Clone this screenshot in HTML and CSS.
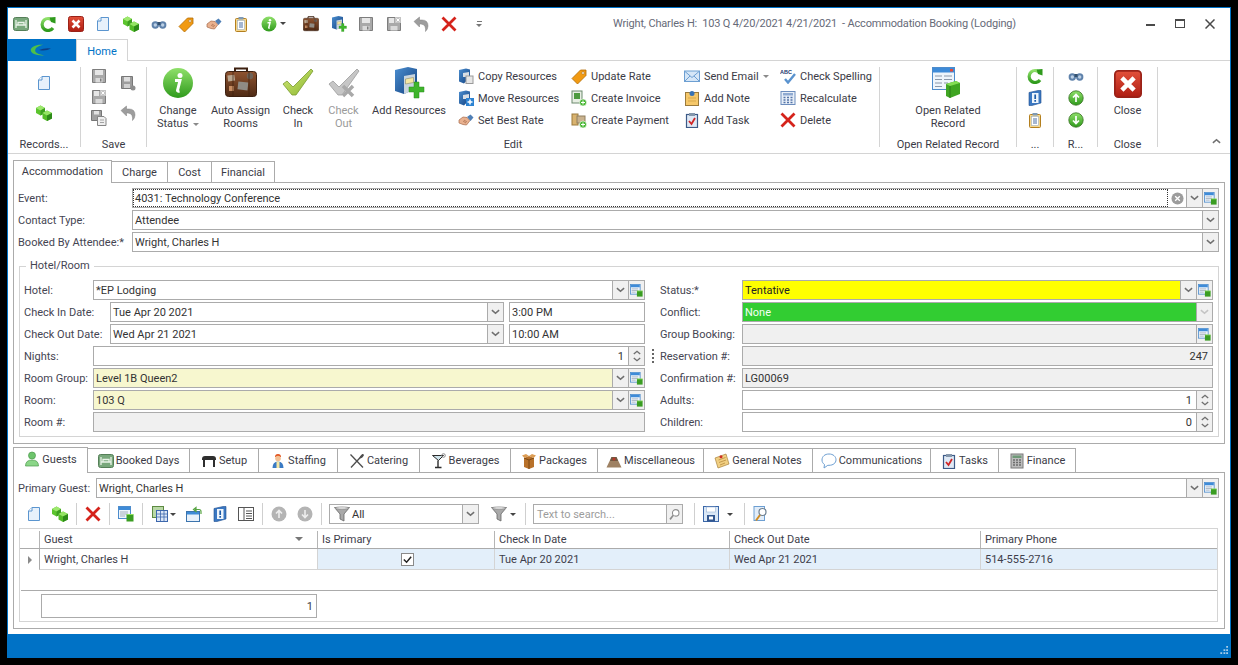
FILE: index.html
```html
<!DOCTYPE html>
<html lang="en">
<head>
<meta charset="utf-8">
<title>Accommodation Booking (Lodging)</title>
<link rel="stylesheet" href="styles.css">
</head>
<body>
<svg class="defs" aria-hidden="true">
<defs>
<linearGradient id="gGreen" x1="0" y1="0" x2="0" y2="1"><stop offset="0" stop-color="#8fe06a"/><stop offset="1" stop-color="#2f9a1c"/></linearGradient>
<linearGradient id="gLime" x1="0" y1="0" x2="1" y2="1"><stop offset="0" stop-color="#d3ea7a"/><stop offset="1" stop-color="#8ab52e"/></linearGradient>
<linearGradient id="gBlue" x1="0" y1="0" x2="1" y2="1"><stop offset="0" stop-color="#4b8ed0"/><stop offset="1" stop-color="#12407f"/></linearGradient>
<linearGradient id="gRed" x1="0" y1="0" x2="0" y2="1"><stop offset="0" stop-color="#e2503a"/><stop offset="1" stop-color="#ae1d12"/></linearGradient>
<linearGradient id="gBrown" x1="0" y1="0" x2="0" y2="1"><stop offset="0" stop-color="#8e5330"/><stop offset="1" stop-color="#4e2a14"/></linearGradient>
<symbol id="bed" viewBox="0 0 16 16"><rect x=".5" y="1.500" width="15" height="13" rx="2" fill="#79a87c" stroke="#557f58"/><path d="M3 4v8M13 4v8M3 9h10M5 6.500h6V9H5z" stroke="#eaf3e8" fill="none" stroke-width="1.300"/></symbol>
<symbol id="refresh" viewBox="0 0 16 16"><path d="M13 5A6 6 0 1 0 13 12" fill="none" stroke="url(#gGreen)" stroke-width="3.200"/><path d="M9.500 1.500L15.500 1v6.500L11 6z" fill="#2f9a1c"/></symbol>
<symbol id="closer" viewBox="0 0 16 16"><rect x=".5" y=".5" width="15" height="15" rx="2" fill="url(#gRed)" stroke="#9a2218"/><path d="M4.500 4.500l7 7M11.500 4.500l-7 7" stroke="#fff" stroke-width="2.600"/></symbol>
<symbol id="newdoc" viewBox="0 0 16 16"><path d="M2.500 5L6 1.500h7.500v13h-11z" fill="#e7f1fb" stroke="#5b95cf"/><path d="M6 1.500V5H2.500" fill="#fff" stroke="#5b95cf"/></symbol>
<symbol id="cubes" viewBox="0 0 16 16"><path d="M0 3l4.500-2.500L9 3v5l-4.500 2.500L0 8z" fill="#5cc42e"/><path d="M0 3l4.500 2.500L9 3 4.500.5z" fill="#9ee86e"/><path d="M4.500 5.500v5L9 8V3z" fill="#3c9f20"/><path d="M6.500 8L11 5.500 16 8v5.500L11 16l-4.500-2.500z" fill="#54bd28"/><path d="M6.500 8l4.500 2.500L16 8l-5-2.500z" fill="#94e464"/><path d="M11 10.500V16l5-2.500V8z" fill="#2d8b18"/></symbol>
<symbol id="binoc" viewBox="0 0 16 16"><circle cx="4.300" cy="9" r="3.700" fill="#5f82ab"/><circle cx="11.700" cy="9" r="3.700" fill="#5f82ab"/><circle cx="4.300" cy="9" r="1.700" fill="#bcd0e5"/><circle cx="11.700" cy="9" r="1.700" fill="#bcd0e5"/><rect x="6.500" y="6" width="3" height="3" fill="#34516f"/></symbol>
<symbol id="tag" viewBox="0 0 16 16"><path d="M1 10.500L9.500 2H15v5.500L6.500 16z" fill="#f19a12" stroke="#b26d08" stroke-width=".8"/><circle cx="12" cy="5" r="1.300" fill="#fff" stroke="#a86a10" stroke-width=".6"/></symbol>
<symbol id="hands" viewBox="0 0 16 16"><path d="M1 8l4-3 4 .5 3 3-3.500 4.500-3.500-.5L1 11z" fill="#e9b18f" stroke="#a66a4a" stroke-width=".7"/><path d="M9 5l3.500-2.500 3 3-3 3.500z" fill="#4f7fb5"/><path d="M5 9l3 2M6 8l3 2" stroke="#a66a4a" stroke-width=".7"/></symbol>
<symbol id="clip" viewBox="0 0 16 16"><rect x="2.500" y="2.500" width="11" height="13" rx="1" fill="#f5d68b" stroke="#b37f1f"/><rect x="4.500" y="4.500" width="7" height="9" fill="#fff" stroke="#8aa4c4" stroke-width=".5"/><rect x="5.500" y="1" width="5" height="2.500" fill="#7f9ab5"/><path d="M6 7h4M6 9h4M6 11h4" stroke="#4a6ea5"/></symbol>
<symbol id="info" viewBox="0 0 32 32"><circle cx="16" cy="16" r="15" fill="url(#gGreen)"/><path d="M13 13.500h5l-2.500 10q0 1 2 .5" fill="none" stroke="#fff" stroke-width="3"/><circle cx="18" cy="8.500" r="2.500" fill="#fff"/></symbol>
<symbol id="suit" viewBox="0 0 32 32"><path d="M10 5V1.500h12V5" fill="none" stroke="#3d2010" stroke-width="2"/><rect x=".5" y="4.500" width="31" height="25" rx="3" fill="url(#gBrown)" stroke="#3d2010"/><rect x="3" y="8" width="7" height="6" fill="#b9a68f" transform="rotate(-8 7 13)"/><rect x="13" y="15" width="10" height="8" fill="#8f8b84" transform="rotate(6 19 18)"/><circle cx="25" cy="9" r="3.200" fill="#6e6257"/><rect x="4" y="19" width="5" height="5" fill="#c78d62"/><path d="M8 5v25M24 5v25" stroke="#3d2010" stroke-width=".7"/></symbol>
<symbol id="addres" viewBox="0 0 32 32"><path d="M2 3l13-3 9 2v19l-13 6-9-3z" fill="url(#gBlue)"/><path d="M11 9l11-2v16l-11 4z" fill="#c8d4de"/><path d="M12.500 12l8-1.500v5l-8 1.500z" fill="#f6e7a3" stroke="#8a8a6a" stroke-width=".6"/><path d="M21 15h5v5h5v5h-5v6h-5v-6h-5v-5h5z" fill="#3fb52c" stroke="#2a8a1c" stroke-width=".5"/></symbol>
<symbol id="save" viewBox="0 0 16 16"><path d="M1.500 1.500h13v13h-13z" fill="#a9a9a9" stroke="#7d7d7d"/><rect x="4" y="2" width="8" height="5" fill="#e6e6e6"/><rect x="4.500" y="10" width="7" height="4.500" fill="#dadada"/><rect x="9" y="10.500" width="1.500" height="3" fill="#7d7d7d"/></symbol>
<symbol id="savex" viewBox="0 0 16 16"><path d="M1.500 1.500h13v13h-13z" fill="#a9a9a9" stroke="#7d7d7d"/><rect x="3" y="2" width="5" height="5" fill="#e6e6e6"/><rect x="4.500" y="10" width="7" height="4.500" fill="#dadada"/><rect x="9" y="1" width="6" height="6" fill="#c4c4c4"/><path d="M10.500 2.500l3 3M13.500 2.500l-3 3" stroke="#fff"/></symbol>
<symbol id="saveas" viewBox="0 0 16 16"><path d="M.5.500h10v10H.5z" fill="#a0a0a0" stroke="#767676"/><rect x="3" y="1" width="5" height="3.500" fill="#e2e2e2"/><path d="M6.500 6.500H13l2 2v7H6.500z" fill="#efefef" stroke="#858585"/><path d="M9 10h4M9 12.500h4" stroke="#a3a3a3"/></symbol>
<symbol id="savep" viewBox="0 0 16 16"><path d="M1.500 1.500h11v12h-11z" fill="#9c9c9c" stroke="#777"/><rect x="4" y="2" width="6" height="4.500" fill="#dedede"/><rect x="4" y="9" width="6" height="4" fill="#d0d0d0"/><circle cx="13" cy="13" r="2.500" fill="#8e8e8e"/></symbol>
<symbol id="undo" viewBox="0 0 16 16"><path d="M1 5.500L6.500 1v3H9q6 0 6 6 0 3-2.500 5.500Q13 13 12 10.500 11 8 8 8H6.500v3z" fill="#9d9d9d" stroke="#808080" stroke-width=".5"/></symbol>
<symbol id="xred" viewBox="0 0 16 16"><path d="M1.500 1.500l13 13M14.500 1.500l-13 13" stroke="#d5231b" stroke-width="2.800"/></symbol>
<symbol id="checkg" viewBox="0 0 32 32"><path d="M1 17l4-3 6 6L29 2l2 2-17 24h-4z" fill="url(#gLime)" stroke="#7a9a30" stroke-width=".8"/></symbol>
<symbol id="checkx" viewBox="0 0 32 32"><path d="M1 17l4-3 6 6L29 2l2 2-17 24h-4z" fill="#c6c6c6" stroke="#9c9c9c" stroke-width=".8"/><path d="M15 19l10 10M25 19L15 29" stroke="#a9a9a9" stroke-width="3.500"/></symbol>
<symbol id="copyr" viewBox="0 0 16 16"><path d="M1 2l7-1.500 4 1V9l-6 6.500-5-2z" fill="url(#gBlue)"/><path d="M5 5l6-1v5H5z" fill="#d8dee5"/><rect x="8" y="8" width="7" height="7.500" fill="#e6e6e6" stroke="#9a9a9a"/></symbol>
<symbol id="mover" viewBox="0 0 16 16"><path d="M1 2l7-1.500 4 1V9l-6 6.500-5-2z" fill="url(#gBlue)"/><path d="M5 5l6-1v5H5z" fill="#d8dee5"/><rect x="8" y="8" width="8" height="8" fill="#2d83d2"/><path d="M12 9.500v5M9.500 12h5" stroke="#fff" stroke-width="1.500"/></symbol>
<symbol id="invoice" viewBox="0 0 16 16"><rect x="1" y="1" width="10" height="12" fill="#e8efe4" stroke="#6c8a6e"/><rect x="3" y="3" width="6" height="6" fill="#4d9a3f"/><circle cx="12" cy="12.500" r="3.500" fill="#47b632" stroke="#fff" stroke-width=".6"/><path d="M12 10.500v4M10 12.500h4" stroke="#fff"/></symbol>
<symbol id="payment" viewBox="0 0 16 16"><rect x="1" y="2" width="6" height="11" fill="#d9b36f" stroke="#9c7a3c"/><rect x="6" y="4" width="8" height="7" fill="#c9b28e" stroke="#8f7e5e"/><circle cx="12" cy="12.500" r="3.500" fill="#47b632" stroke="#fff" stroke-width=".6"/><path d="M12 10.500v4M10 12.500h4" stroke="#fff"/></symbol>
<symbol id="mail" viewBox="0 0 16 16"><rect x=".5" y="3" width="15" height="10.500" fill="#d5e6f7" stroke="#6d9fd2"/><path d="M1 3.500l7 6 7-6M1 13l5-5M15 13l-5-5" fill="none" stroke="#6d9fd2"/></symbol>
<symbol id="note" viewBox="0 0 16 16"><rect x="1.500" y="2.500" width="13" height="13" fill="#f6c86a" stroke="#9a7a3c"/><circle cx="8" cy="3.500" r="2.500" fill="#3a73b3"/><path d="M4 8h8M4 11h8" stroke="#d8a94c"/></symbol>
<symbol id="task" viewBox="0 0 16 16"><rect x="2.500" y="2.500" width="11" height="13" fill="#dfe9f5" stroke="#3c5a87" stroke-width="1.200"/><rect x="5" y="1" width="6" height="3" fill="#8496ab"/><path d="M5 9l2.500 3L11 6" fill="none" stroke="#d02525" stroke-width="1.800"/></symbol>
<symbol id="spell" viewBox="0 0 16 16"><text x="0" y="6" font-family="Liberation Sans, sans-serif" font-size="5.500" font-weight="700" fill="#22386e">ABC</text><path d="M5 11l3 3.500L15 6" fill="none" stroke="#5a93cf" stroke-width="2.400"/></symbol>
<symbol id="calc" viewBox="0 0 16 16"><rect x="1" y="1.500" width="14" height="13" fill="#e8eff8" stroke="#6d8dbd"/><rect x="3" y="3" width="10" height="2.500" fill="#8faad1"/><path d="M3.500 7.500h2M7 7.500h2M10.500 7.500h2M3.500 10h2M7 10h2M10.500 10h2M3.500 12.500h2M7 12.500h2M10.500 12.500h2" stroke="#5575a8" stroke-width="1.400"/></symbol>
<symbol id="rel" viewBox="0 0 32 32"><rect x=".5" y=".5" width="22" height="22" fill="#eef5fc" stroke="#4d8ccc"/><rect x="1" y="1" width="21" height="4.500" fill="#3e8bd8"/><rect x="18" y="2" width="3" height="2.500" fill="#e54a3a"/><path d="M3 9h7M12 9h8M3 12.500h7M12 12.500h8M3 16h7M12 16h4M3 19.500h7" stroke="#8a98aa"/><path d="M14 17l10-3 4 2v11l-10 4-4-2z" fill="#3fa522"/><path d="M14 17l4 2 10-3-4-2z" fill="#83dd54"/><path d="M18 19v12" stroke="#2b7c17"/></symbol>
<symbol id="lookup" viewBox="0 0 16 16"><rect x=".5" y=".5" width="12" height="12" fill="#eef5fc" stroke="#4d8ccc"/><rect x="1" y="1" width="11" height="3" fill="#3e8bd8"/><path d="M2 6h8M2 8h8M2 10h5" stroke="#a4afbb"/><rect x="8.500" y="8.500" width="7" height="7" fill="#3a9d22"/><path d="M8.500 8.500h7" stroke="#8ee05e"/></symbol>
<symbol id="book" viewBox="0 0 16 16"><path d="M2 2.500L11 .5h3V13l-9 2.500H2z" fill="#3b78c2" stroke="#1f4f8f" stroke-width=".6"/><rect x="5" y="3" width="6.500" height="10" fill="#eef5fc"/><path d="M8.200 4.500v4.500M8.200 10v1.800" stroke="#1a5aa8" stroke-width="1.700"/></symbol>
<symbol id="up" viewBox="0 0 16 16"><circle cx="8" cy="8" r="7.200" fill="url(#gGreen)" stroke="#35701f" stroke-width=".8"/><path d="M8 12V5M5 7.500L8 4.500l3 3" fill="none" stroke="#fff" stroke-width="1.700"/></symbol>
<symbol id="down" viewBox="0 0 16 16"><circle cx="8" cy="8" r="7.200" fill="url(#gGreen)" stroke="#35701f" stroke-width=".8"/><path d="M8 4v7M5 8.500l3 3 3-3" fill="none" stroke="#fff" stroke-width="1.700"/></symbol>
<symbol id="upg" viewBox="0 0 16 16"><circle cx="8" cy="8" r="7.500" fill="#b4b4b4"/><path d="M8 12V5M5 7.500L8 4.500l3 3" fill="none" stroke="#eee" stroke-width="1.600"/></symbol>
<symbol id="downg" viewBox="0 0 16 16"><circle cx="8" cy="8" r="7.500" fill="#b4b4b4"/><path d="M8 4v7M5 8.500l3 3 3-3" fill="none" stroke="#eee" stroke-width="1.600"/></symbol>
<symbol id="person" viewBox="0 0 16 16"><circle cx="8" cy="4.500" r="3.500" fill="#6dc46c" stroke="#4b9a4b" stroke-width=".7"/><path d="M1.500 15q0-6 6.500-6t6.500 6z" fill="#8bd688" stroke="#4b9a4b" stroke-width=".7"/></symbol>
<symbol id="table" viewBox="0 0 16 16"><path d="M1 6q0-3 3-3h8q3 0 3 3v1H1z" fill="#2e2e2e"/><rect x="2" y="7" width="2" height="7" fill="#2e2e2e"/><rect x="12" y="7" width="2" height="7" fill="#2e2e2e"/></symbol>
<symbol id="staff" viewBox="0 0 16 16"><path d="M5 4q0-3 3-3t3 3z" fill="#e2531e"/><circle cx="8" cy="5.500" r="2.800" fill="#f2bf93"/><path d="M2.500 15q0-6.500 5.500-6.500t5.500 6.500z" fill="#3a7ac4"/><rect x="6.500" y="8.500" width="3" height="6.500" fill="#f6e7a3"/></symbol>
<symbol id="cater" viewBox="0 0 16 16"><path d="M1.500 1.500L14 14.500" stroke="#4d4d4d" stroke-width="1.300"/><path d="M14 1.500L2 14.500" stroke="#4d4d4d" stroke-width="1.300"/><path d="M10.500 5.500q0-3 3.500-4.500l1 1q-1.500 3.500-4.500 3.500z" fill="#4d4d4d"/></symbol>
<symbol id="bev" viewBox="0 0 16 16"><path d="M1.500 2.500h11L7.500 7.500z" fill="#cfe4ec" stroke="#2d2d2d"/><path d="M7 7.500v6.500M4 14.500h6.500" stroke="#2d2d2d" stroke-width="1.400"/><circle cx="12.500" cy="2.500" r="1.800" fill="none" stroke="#8a8a8a"/></symbol>
<symbol id="box" viewBox="0 0 16 16"><path d="M3 5l5-2 5 2v9l-5 2-5-2z" fill="#b8712a"/><path d="M8 7v9M3 5l5 2 5-2" stroke="#7b4815" fill="none"/><path d="M1 2.500L5 1l3 2-4.500 2zM15 2.500L11 1 8 3l4.500 2z" fill="#dc9d55"/></symbol>
<symbol id="misc" viewBox="0 0 16 16"><path d="M.5 14.500L5.500 4h5l5 10.500z" fill="#9e8163"/><path d="M5.500 4h5L12 8H4z" fill="#6e5a44"/><circle cx="8" cy="6" r="1.500" fill="#b93a2a"/></symbol>
<symbol id="gnote" viewBox="0 0 16 16"><path d="M1 5L12 1l3 10-11 4z" fill="#f1cf82" stroke="#a8823c" stroke-width=".7"/><path d="M4.500 7l7-2.500M5 9.500l7-2.500M6 12l5-2" stroke="#c49a4d"/><circle cx="7" cy="3.800" r="1.500" fill="#cf2f24"/></symbol>
<symbol id="bubble" viewBox="0 0 16 16"><path d="M8 1C3.800 1 1 3.500 1 7c0 2 1 3.500 2.500 4.500L3 15l3.800-2.700H8c4.200 0 7-2.300 7-5.500S12.200 1 8 1z" fill="#fff" stroke="#6d9fd2"/></symbol>
<symbol id="fin" viewBox="0 0 16 16"><rect x="2" y="1" width="12" height="14" fill="#bdbdbd" stroke="#7a7a7a"/><rect x="3.500" y="2.500" width="9" height="2.500" fill="#6f9a78"/><path d="M4 7h2M7 7h2M10 7h2M4 9.500h2M7 9.500h2M10 9.500h2M4 12h2M7 12h2M10 12h2" stroke="#6d6d6d" stroke-width="1.300"/></symbol>
<symbol id="funnel" viewBox="0 0 16 16"><path d="M.5 1.500h15L10 8v7l-4-2V8z" fill="#a9a9a9" stroke="#666" stroke-width=".8"/><ellipse cx="8" cy="2" rx="7" ry="1.200" fill="#e6e6e6" stroke="#777" stroke-width=".5"/></symbol>
<symbol id="cols" viewBox="0 0 16 16"><rect x=".5" y=".5" width="11" height="11" fill="#b9d8a6" stroke="#5d8a42"/><rect x="4.500" y="4.500" width="11" height="11" fill="#dbe6f7" stroke="#3d67ac"/><path d="M5 8h10M5 11h10M8.500 5v10M12 5v10" stroke="#3d67ac" stroke-width=".8"/></symbol>
<symbol id="winarr" viewBox="0 0 16 16"><rect x=".5" y="5.500" width="13" height="10" fill="#e8f1fb" stroke="#3c74ad"/><rect x="1" y="6" width="12" height="2.500" fill="#3e8bd8"/><path d="M9 3.500h4q2 0 2 2V8M7.500 3.500l2.500-2v4z" fill="none" stroke="#58a544" stroke-width="1.200"/></symbol>
<symbol id="listp" viewBox="0 0 16 16"><rect x=".5" y="1.500" width="15" height="13" fill="#fff" stroke="#555"/><path d="M6 2v12" stroke="#555"/><path d="M8 5h6M8 7.500h6M8 10h6M8 12.500h6" stroke="#555"/></symbol>
<symbol id="disk" viewBox="0 0 16 16"><rect x=".5" y=".5" width="15" height="15" fill="#d9e7f6" stroke="#3b67a8"/><rect x="4" y="9" width="8" height="6.500" fill="#31568f"/><rect x="6" y="10.500" width="4" height="3" fill="#fff"/><rect x="3.500" y="1" width="9" height="5" fill="#fff" stroke="#9bb4d6" stroke-width=".6"/></symbol>
<symbol id="zoomd" viewBox="0 0 16 16"><rect x="1" y=".5" width="10.500" height="14" fill="#e2edf9" stroke="#6d9fd2"/><circle cx="9.500" cy="6" r="3.500" fill="#fff" stroke="#6d7f90" stroke-width="1.200"/><path d="M7 9l-4 5.500" stroke="#d08c21" stroke-width="2"/></symbol>
<symbol id="mag" viewBox="0 0 16 16"><circle cx="9.500" cy="6" r="4" fill="#fff" stroke="#8d8d8d" stroke-width="1.300"/><path d="M6.500 9l-4 5" stroke="#8d8d8d" stroke-width="2"/></symbol>
<symbol id="chev" viewBox="0 0 10 6"><path d="M1 1l4 3.500L9 1" fill="none" stroke="#6f6f6f" stroke-width="1.700"/></symbol>
<symbol id="chevd" viewBox="0 0 10 6"><path d="M1 1l4 3.500L9 1" fill="none" stroke="#c4c4c4" stroke-width="1.700"/></symbol>
<symbol id="chevu" viewBox="0 0 10 6"><path d="M1 5l4-3.500L9 5" fill="none" stroke="#6f6f6f" stroke-width="1.700"/></symbol>
<symbol id="clr" viewBox="0 0 14 14"><circle cx="7" cy="7" r="6.500" fill="#9c9c9c"/><path d="M4.500 4.500l5 5M9.500 4.500l-5 5" stroke="#fff" stroke-width="1.400"/></symbol>
<symbol id="logo" viewBox="0 0 32 16"><path d="M18 1C8 0 1 4 1 8c0 5 9 8 19 7C11 14 6 11 7 7.500 8 4 13 2 18 1z" fill="#4fbf4a"/><path d="M12 8q7-3 16-2-7 4-16 2z" fill="#0d3f86"/></symbol>
<symbol id="chk" viewBox="0 0 12 12"><path d="M2 6l3 3 5-6" fill="none" stroke="#222" stroke-width="1.600"/></symbol>
</defs>
</svg>

<div class="window">
  <header class="titlebar">
    <div class="qat">
      <span class="q"><svg class="i16"><use href="#bed"/></svg></span>
      <span class="q"><svg class="i16"><use href="#refresh"/></svg></span>
      <span class="q"><svg class="i16"><use href="#closer"/></svg></span>
      <span class="q"><svg class="i16"><use href="#newdoc"/></svg></span>
      <span class="q"><svg class="i16"><use href="#cubes"/></svg></span>
      <span class="q"><svg class="i16"><use href="#binoc"/></svg></span>
      <span class="q"><svg class="i16"><use href="#tag"/></svg></span>
      <span class="q"><svg class="i16"><use href="#hands"/></svg></span>
      <span class="q"><svg class="i16"><use href="#clip"/></svg></span>
      <span class="q q-drop"><svg class="i16"><use href="#info"/></svg><i class="caret"></i></span>
      <span class="q"><svg class="i16"><use href="#suit"/></svg></span>
      <span class="q"><svg class="i16"><use href="#addres"/></svg></span>
      <span class="q"><svg class="i16"><use href="#save"/></svg></span>
      <span class="q"><svg class="i16"><use href="#savex"/></svg></span>
      <span class="q"><svg class="i16"><use href="#undo"/></svg></span>
      <span class="q"><svg class="i16"><use href="#xred"/></svg></span>
      <span class="q q-menu"><i class="menu-bar"></i><i class="caret caret-sm"></i></span>
    </div>
    <div class="title">Wright, Charles H:&nbsp; 103 Q 4/20/2021 4/21/2021&nbsp; - Accommodation Booking (Lodging)</div>
    <div class="winctl">
      <span class="wbtn"><i class="w-min"></i></span>
      <span class="wbtn"><i class="w-max"></i></span>
      <span class="wbtn"><svg class="w-close" viewBox="0 0 10 10"><path d="M.5.500l9 9M9.500.500l-9 9" stroke="#4a4a4a" stroke-width="1.500"/></svg></span>
    </div>
  </header>

  <div class="tabstrip">
    <div class="appbtn"><svg class="logo"><use href="#logo"/></svg></div>
    <div class="hometab">Home</div>
  </div>

  <div class="ribbon">
    <section class="grp g-rec">
      <div class="grp-body stack-2"><svg class="i16"><use href="#newdoc"/></svg><svg class="i16"><use href="#cubes"/></svg></div>
      <div class="grp-label">Records...</div>
    </section>
    <section class="grp g-save">
      <div class="grp-body save-cols">
        <div class="save-a"><svg class="i16"><use href="#save"/></svg><svg class="i16"><use href="#savex"/></svg><svg class="i16"><use href="#saveas"/></svg></div>
        <div class="save-b"><svg class="i16"><use href="#savep"/></svg><svg class="i16"><use href="#undo"/></svg></div>
      </div>
      <div class="grp-label">Save</div>
    </section>
    <section class="grp g-edit">
      <div class="grp-body edit-body">
        <div class="lg b-status"><svg class="i32"><use href="#info"/></svg><span>Change<br>Status <i class="caret caret-g"></i></span></div>
        <div class="lg b-auto"><svg class="i32"><use href="#suit"/></svg><span>Auto Assign<br>Rooms</span></div>
        <div class="lg b-in"><svg class="i32"><use href="#checkg"/></svg><span>Check<br>In</span></div>
        <div class="lg dis b-out"><svg class="i32"><use href="#checkx"/></svg><span>Check<br>Out</span></div>
        <div class="lg b-add"><svg class="i32"><use href="#addres"/></svg><span>Add Resources</span></div>
        <div class="smcol sc1 sc-first">
          <div class="sm"><svg class="i16"><use href="#copyr"/></svg>Copy Resources</div>
          <div class="sm"><svg class="i16"><use href="#mover"/></svg>Move Resources</div>
          <div class="sm"><svg class="i16"><use href="#hands"/></svg>Set Best Rate</div>
        </div>
        <div class="smcol sc1">
          <div class="sm"><svg class="i16"><use href="#tag"/></svg>Update Rate</div>
          <div class="sm"><svg class="i16"><use href="#invoice"/></svg>Create Invoice</div>
          <div class="sm"><svg class="i16"><use href="#payment"/></svg>Create Payment</div>
        </div>
        <div class="smcol sc3">
          <div class="sm"><svg class="i16"><use href="#mail"/></svg>Send Email <i class="caret caret-g"></i></div>
          <div class="sm"><svg class="i16"><use href="#note"/></svg>Add Note</div>
          <div class="sm"><svg class="i16"><use href="#task"/></svg>Add Task</div>
        </div>
        <div class="smcol">
          <div class="sm"><svg class="i16"><use href="#spell"/></svg>Check Spelling</div>
          <div class="sm"><svg class="i16"><use href="#calc"/></svg>Recalculate</div>
          <div class="sm"><svg class="i16"><use href="#xred"/></svg>Delete</div>
        </div>
      </div>
      <div class="grp-label">Edit</div>
    </section>
    <section class="grp g-open">
      <div class="grp-body center-body"><div class="lg"><svg class="i32"><use href="#rel"/></svg><span>Open Related<br>Record</span></div></div>
      <div class="grp-label">Open Related Record</div>
    </section>
    <section class="grp g-misc">
      <div class="grp-body icons3"><svg class="i16"><use href="#refresh"/></svg><svg class="i16"><use href="#book"/></svg><svg class="i16"><use href="#clip"/></svg></div>
      <div class="grp-label">...</div>
    </section>
    <section class="grp g-r">
      <div class="grp-body icons3"><svg class="i16"><use href="#binoc"/></svg><svg class="i16"><use href="#up"/></svg><svg class="i16"><use href="#down"/></svg></div>
      <div class="grp-label">R...</div>
    </section>
    <section class="grp g-close">
      <div class="grp-body center-body"><div class="lg"><svg class="i26"><use href="#closer"/></svg><span>Close</span></div></div>
      <div class="grp-label">Close</div>
    </section>
    <svg class="collapse"><use href="#chevu"/></svg>
  </div>

  <main class="content">
    <nav class="tabs">
      <div class="tab on w-acc">Accommodation</div>
      <div class="tab w-chg">Charge</div>
      <div class="tab w-cost">Cost</div>
      <div class="tab w-fnc">Financial</div>
    </nav>
    <div class="panel panel-top">
      <div class="rows">
        <div class="row">
          <label class="lbl l-top">Event:</label>
          <div class="field"><span class="val focus">4031: Technology Conference</span><span class="clear"><svg class="i13"><use href="#clr"/></svg></span><span class="btn"><svg class="cv"><use href="#chev"/></svg></span><span class="btn"><svg class="i13"><use href="#lookup"/></svg></span></div>
        </div>
        <div class="row">
          <label class="lbl l-top">Contact Type:</label>
          <div class="field"><span class="val">Attendee</span><span class="btn"><svg class="cv"><use href="#chev"/></svg></span></div>
        </div>
        <div class="row">
          <label class="lbl l-top">Booked By Attendee:*</label>
          <div class="field"><span class="val">Wright, Charles H</span><span class="btn"><svg class="cv"><use href="#chev"/></svg></span></div>
        </div>
      </div>
      <fieldset class="fs">
        <legend>Hotel/Room</legend>
        <div class="fs-cols">
          <div class="rows col-left">
            <div class="row">
              <label class="lbl l-h">Hotel:</label>
              <div class="field"><span class="val">*EP Lodging</span><span class="btn"><svg class="cv"><use href="#chev"/></svg></span><span class="btn"><svg class="i13"><use href="#lookup"/></svg></span></div>
            </div>
            <div class="row">
              <label class="lbl l-d">Check In Date:</label>
              <div class="field"><span class="val">Tue Apr 20 2021</span><span class="btn"><svg class="cv"><use href="#chev"/></svg></span></div>
              <div class="field time"><span class="val">3:00 PM</span></div>
            </div>
            <div class="row">
              <label class="lbl l-d">Check Out Date:</label>
              <div class="field"><span class="val">Wed Apr 21 2021</span><span class="btn"><svg class="cv"><use href="#chev"/></svg></span></div>
              <div class="field time"><span class="val">10:00 AM</span></div>
            </div>
            <div class="row">
              <label class="lbl l-h">Nights:</label>
              <div class="field"><span class="val num">1</span><span class="btn spin"><svg class="cv-s"><use href="#chevu"/></svg><svg class="cv-s"><use href="#chev"/></svg></span></div>
            </div>
            <div class="row">
              <label class="lbl l-h">Room Group:</label>
              <div class="field pale"><span class="val">Level 1B Queen2</span><span class="btn"><svg class="cv"><use href="#chev"/></svg></span><span class="btn"><svg class="i13"><use href="#lookup"/></svg></span></div>
            </div>
            <div class="row">
              <label class="lbl l-h">Room:</label>
              <div class="field pale"><span class="val">103 Q</span><span class="btn"><svg class="cv"><use href="#chev"/></svg></span><span class="btn"><svg class="i13"><use href="#lookup"/></svg></span></div>
            </div>
            <div class="row">
              <label class="lbl l-h">Room #:</label>
              <div class="field ro"><span class="val"></span></div>
            </div>
          </div>
          <div class="split"><i></i><i></i><i></i><i></i></div>
          <div class="rows col-right">
            <div class="row">
              <label class="lbl l-r">Status:*</label>
              <div class="field yellow"><span class="val">Tentative</span><span class="btn"><svg class="cv"><use href="#chev"/></svg></span><span class="btn"><svg class="i13"><use href="#lookup"/></svg></span></div>
            </div>
            <div class="row">
              <label class="lbl l-r">Conflict:</label>
              <div class="field green"><span class="val">None</span><span class="btn"><svg class="cv"><use href="#chevd"/></svg></span></div>
            </div>
            <div class="row">
              <label class="lbl l-r">Group Booking:</label>
              <div class="field ro"><span class="val"></span><span class="btn"><svg class="i13"><use href="#lookup"/></svg></span></div>
            </div>
            <div class="row">
              <label class="lbl l-r">Reservation #:</label>
              <div class="field ro"><span class="val num">247</span></div>
            </div>
            <div class="row">
              <label class="lbl l-r">Confirmation #:</label>
              <div class="field ro"><span class="val">LG00069</span></div>
            </div>
            <div class="row">
              <label class="lbl l-r">Adults:</label>
              <div class="field"><span class="val num">1</span><span class="btn spin"><svg class="cv-s"><use href="#chevu"/></svg><svg class="cv-s"><use href="#chev"/></svg></span></div>
            </div>
            <div class="row">
              <label class="lbl l-r">Children:</label>
              <div class="field"><span class="val num">0</span><span class="btn spin"><svg class="cv-s"><use href="#chevu"/></svg><svg class="cv-s"><use href="#chev"/></svg></span></div>
            </div>
          </div>
        </div>
      </fieldset>
    </div>

    <nav class="tabs tabs-lower">
      <div class="tab on w-guests"><svg class="i16"><use href="#person"/></svg>Guests</div>
      <div class="tab w-booked"><svg class="i16"><use href="#bed"/></svg>Booked Days</div>
      <div class="tab w-setup"><svg class="i16"><use href="#table"/></svg>Setup</div>
      <div class="tab w-staff"><svg class="i16"><use href="#staff"/></svg>Staffing</div>
      <div class="tab w-cater"><svg class="i16"><use href="#cater"/></svg>Catering</div>
      <div class="tab w-bev"><svg class="i16"><use href="#bev"/></svg>Beverages</div>
      <div class="tab w-pack"><svg class="i16"><use href="#box"/></svg>Packages</div>
      <div class="tab w-misc"><svg class="i16"><use href="#misc"/></svg>Miscellaneous</div>
      <div class="tab w-notes"><svg class="i16"><use href="#gnote"/></svg>General Notes</div>
      <div class="tab w-comm"><svg class="i16"><use href="#bubble"/></svg>Communications</div>
      <div class="tab w-tasks"><svg class="i16"><use href="#task"/></svg>Tasks</div>
      <div class="tab w-fin"><svg class="i16"><use href="#fin"/></svg>Finance</div>
    </nav>
    <div class="panel panel-low">
      <div class="row">
        <label class="lbl l-pg">Primary Guest:</label>
        <div class="field"><span class="val">Wright, Charles H</span><span class="btn"><svg class="cv"><use href="#chev"/></svg></span><span class="btn"><svg class="i13"><use href="#lookup"/></svg></span></div>
      </div>
      <div class="toolbar">
        <span class="tb"><svg class="i16"><use href="#newdoc"/></svg></span>
        <span class="tb"><svg class="i16"><use href="#cubes"/></svg></span>
        <i class="sep"></i>
        <span class="tb"><svg class="i16"><use href="#xred"/></svg></span>
        <i class="sep"></i>
        <span class="tb"><svg class="i16"><use href="#lookup"/></svg></span>
        <i class="sep"></i>
        <span class="tb tb-cols"><svg class="i16"><use href="#cols"/></svg><i class="caret"></i></span>
        <span class="tb"><svg class="i16"><use href="#winarr"/></svg></span>
        <span class="tb"><svg class="i16"><use href="#book"/></svg></span>
        <span class="tb"><svg class="i16"><use href="#listp"/></svg></span>
        <i class="sep"></i>
        <span class="tb"><svg class="i16"><use href="#upg"/></svg></span>
        <span class="tb"><svg class="i16"><use href="#downg"/></svg></span>
        <i class="sep"></i>
        <div class="field combo"><svg class="i16 fn"><use href="#funnel"/></svg><span class="val">All</span><span class="btn"><svg class="cv"><use href="#chev"/></svg></span></div>
        <span class="tb tb-filter"><svg class="i16"><use href="#funnel"/></svg><i class="caret"></i></span>
        <i class="sep"></i>
        <div class="field search"><span class="val hint">Text to search...</span><span class="btn"><svg class="i13"><use href="#mag"/></svg></span></div>
        <i class="sep sep-wide"></i>
        <span class="tb tb-disk"><svg class="i16"><use href="#disk"/></svg><i class="caret"></i></span>
        <i class="sep sep-tight"></i>
        <span class="tb"><svg class="i16"><use href="#zoomd"/></svg></span>
      </div>
      <div class="grid">
        <div class="gr gr-head">
          <div class="c c0"></div>
          <div class="c c1">Guest<i class="sort"></i></div>
          <div class="c c2">Is Primary</div>
          <div class="c c3">Check In Date</div>
          <div class="c c4">Check Out Date</div>
          <div class="c c5">Primary Phone</div>
        </div>
        <div class="gr gr-data">
          <div class="c c0"><i class="rowmark"></i></div>
          <div class="c c1">Wright, Charles H</div>
          <div class="c c2 sel mid"><span class="cb"><svg class="cbi"><use href="#chk"/></svg></span></div>
          <div class="c c3 sel">Tue Apr 20 2021</div>
          <div class="c c4 sel">Wed Apr 21 2021</div>
          <div class="c c5 sel">514-555-2716</div>
        </div>
        <div class="gr-empty"></div>
        <div class="gr-foot"><div class="sum">1</div></div>
      </div>
    </div>
  </main>

  <footer class="status"><svg class="grip" viewBox="0 0 10 10"><path d="M8 0h2v2H8zM5 3.500h2v2H5zM8 3.500h2v2H8zM1.500 7h2v2h-2zM5 7h2v2H5zM8 7h2v2H8z" fill="#a9cde9"/></svg></footer>
</div>
</body>
</html>
```
FILE: styles.css
```css
*{box-sizing:border-box;}
html,body{margin:0;padding:0;height:100%;}
body{background:#000;font-family:Roboto,"Noto Sans","Liberation Sans",sans-serif;font-size:11px;color:#3b3b46;overflow:hidden;padding:7px 7px 7px 7px;}
.defs{position:absolute;width:0;height:0;}
i{font-style:normal;display:block;}
svg{display:block;flex:none;}
.i16{width:16px;height:16px;}
.i13{width:13px;height:13px;}
.i26{width:28px;height:28px;}
.i32{width:32px;height:32px;}

.window{width:1224px;height:651px;background:#fff;border:1px solid #0072c6;border-bottom:0;display:flex;flex-direction:column;}

/* title bar */
.titlebar{height:31px;display:flex;align-items:center;flex:none;}
.qat{display:flex;align-items:center;width:488px;margin-left:-1px;}
.q{width:28px;height:22px;display:flex;align-items:center;justify-content:center;}
.q-drop{width:43px;justify-content:flex-start;padding-left:6px;gap:3px;}
.q-menu{width:32px;flex-direction:column;gap:2px;margin-left:1px;}
.menu-bar{width:5px;height:1px;background:#777;}
.caret{width:0;height:0;border:3px solid transparent;border-top:3px solid #444;border-bottom:0;display:inline-block;vertical-align:middle;}
.caret-sm{border-top-color:#777;}
.caret-g{border-top-color:#8a8a8a;margin-left:2px;}
.title{margin-left:118px;flex:1;color:#666a78;white-space:nowrap;letter-spacing:-.17px;}
.winctl{display:flex;margin-right:5px;}
.wbtn{width:30px;height:22px;display:flex;align-items:center;justify-content:center;}
.w-min{width:9px;height:2px;background:#4a4a4a;margin-top:3px;}
.w-max{width:10px;height:9px;border:1px solid #4a4a4a;border-top-width:2px;}
.w-close{width:10px;height:10px;}

/* ribbon tabs */
.tabstrip{height:22px;display:flex;flex:none;border-bottom:1px solid #d4d4d4;}
.appbtn{width:68px;height:22px;background:#0072c6;display:flex;align-items:center;justify-content:center;}
.logo{width:24px;height:14px;}
.hometab{width:52px;height:22px;background:#fff;border:1px solid #d4d4d4;border-bottom:0;color:#0072c6;text-align:center;line-height:23px;}

/* ribbon */
.ribbon{height:93px;flex:none;display:flex;align-items:flex-start;padding-top:6px;border-bottom:1px solid #d4d4d4;position:relative;}
.grp{height:80px;border-right:1px solid #d4d4d4;display:flex;flex-direction:column;flex:none;}
.g-rec{width:73px;}
.g-save{width:66px;}
.g-edit{width:733px;}
.g-open{width:137px;}
.g-misc{width:37px;}
.g-r{width:44px;}
.g-close{width:60px;}
.grp-body{height:71px;flex:none;}
.grp-label{height:14px;line-height:14px;text-align:center;white-space:nowrap;}
.stack-2{display:flex;flex-direction:column;align-items:center;gap:14px;padding-top:8px;}
.save-cols{display:flex;padding-left:10px;}
.save-a{display:flex;flex-direction:column;gap:5px;padding-top:1px;width:29px;}
.save-b{display:flex;flex-direction:column;gap:14px;padding-top:8px;}
.edit-body{display:flex;padding-left:3px;}
.center-body{display:flex;justify-content:center;}
.icons3{display:flex;flex-direction:column;align-items:center;gap:6px;padding-top:1px;}
.lg{display:flex;flex-direction:column;align-items:center;padding:0 8px;text-align:center;line-height:13px;white-space:nowrap;}
.lg svg{margin-bottom:5px;}
.lg .i26{margin:3px 0 6px;}
.b-status{width:56px;padding:0;}
.b-auto{width:69px;padding:0;}
.b-in{width:46px;padding:0;}
.b-out{width:45px;padding:0;}
.b-add{width:86px;padding:0;}
.dis{color:#9a9a9a;}
.smcol{display:flex;flex-direction:column;margin-top:-2px;}
.sc1{width:113px;}
.sc3{width:96px;}
.sc-first{margin-left:6px;}
.sm{height:22px;display:flex;align-items:center;gap:4px;white-space:nowrap;}
.sm .caret{margin-left:0;}
.collapse{width:9px;height:6px;position:absolute;right:9px;bottom:9px;}

/* content */
.content{flex:1;padding:5px 5px 0;display:flex;flex-direction:column;}
.tabs{display:flex;align-items:flex-end;height:23px;flex:none;position:relative;z-index:1;}
.tab{height:21px;border:1px solid #ababab;border-bottom:0;border-left:0;display:flex;align-items:center;justify-content:center;gap:2px;white-space:nowrap;background:#fff;}
.tab.on{height:23px;border-left:1px solid #ababab;margin-bottom:-1px;padding-bottom:2px;}
.w-acc{width:99px;}
.w-chg{width:56px;}
.w-cost{width:44px;}
.w-fnc{width:63px;}
.panel{border:1px solid #ababab;flex:none;}
.panel-top{height:262px;padding:5px 5px 0 4px;}
.rows{display:flex;flex-direction:column;gap:2px;}
.row{display:flex;gap:5px;height:20px;}
.lbl{flex:none;line-height:22px;height:20px;white-space:nowrap;margin-right:-5px;color:#454552;}
.l-top{width:114px;}
.l-h{width:69px;}
.l-d{width:86px;}
.l-r{width:82px;}
.l-pg{width:78px;}
.field{flex:1;min-width:0;height:20px;border:1px solid #ababab;display:flex;background:#fff;}
.val{flex:1;min-width:0;padding:0 2px;line-height:20px;white-space:nowrap;overflow:hidden;color:#333;}
.val.num{text-align:right;padding-right:4px;}
.focus{outline:1px dotted #333;outline-offset:-1px;}
.clear{width:18px;display:flex;align-items:center;justify-content:center;}
.btn{width:16px;flex:none;background:#f0f0f0;border-left:1px solid #ababab;display:flex;align-items:center;justify-content:center;}
.btn.spin{flex-direction:column;gap:2px;}
.cv{width:9px;height:6px;}
.cv-s{width:8px;height:5px;}
.time{flex:0 0 136px;}
.pale,.pale .val{background:#f7f7cf;}
.ro,.ro .val{background:#f0f0f0;}
.yellow .val{background:#ffff00;color:#222;}
.green .val{background:#32cd32;color:#f4fff4;}

.fs{margin:8px 0 0 1px;padding:5px 5px 4px 4px;border:1px solid #d4d4d4;min-width:0;width:1200px;}
.fs legend{margin-left:2px;padding:0 4px;line-height:12px;height:13px;color:#454552;}
.fs-cols{display:flex;margin-top:2px;}
.col-left{width:621px;flex:none;}
.col-right{flex:1;min-width:0;}
.split{width:15px;flex:none;display:flex;flex-direction:column;align-items:center;justify-content:center;gap:2px;}
.split i{width:2px;height:2px;background:#666;}

/* lower */
.tabs-lower{margin-top:2px;height:26px;}
.tabs-lower .tab{height:24px;}
.tabs-lower .tab.on{height:26px;padding-bottom:3px;}
.w-guests{width:75px;}
.w-booked{width:102px;}
.w-setup{width:69px;}
.w-staff{width:79px;}
.w-cater{width:82px;}
.w-bev{width:91px;}
.w-pack{width:87px;}
.w-misc{width:106px;}
.w-notes{width:109px;}
.w-comm{width:118px;}
.w-tasks{width:68px;}
.w-fin{width:77px;}
.panel-low{height:157px;padding:5px 5px 0 4px;}
.toolbar{height:22px;margin-top:5px;display:flex;align-items:center;margin-left:3px;}
.tb{width:26px;height:22px;display:flex;align-items:center;justify-content:center;flex:none;}
.tb-cols{width:34px;justify-content:flex-start;padding-left:6px;gap:2px;margin-right:1px;}
.tb-filter{width:37px;gap:3px;margin-left:6px;}
.tb-disk{width:44px;justify-content:flex-start;padding-left:5px;gap:8px;margin-right:-1px;}
.sep{width:1px;height:22px;background:#cfcfcf;margin:0 3px;flex:none;}
.sep-wide{margin:0 3px 0 11px;}
.combo{flex:0 0 150px;margin-left:4px;}
.fn{margin:1px 0 0 4px;}
.search{flex:0 0 150px;margin-left:4px;}
.hint{color:#9c9c9c;padding-left:3px;}
.grid{height:94px;margin:3px 0 0 1px;border:1px solid #d4d4d4;width:1199px;}
.gr{display:flex;}
.gr-head{height:20px;border-bottom:1px solid #ababab;}
.gr-data{height:21px;}
.c{flex:none;padding:0 4px;position:relative;white-space:nowrap;color:#3d3d4a;}
.gr-head .c{border-left:1px solid #b5b5b5;margin-top:2px;height:17px;line-height:18px;}
.gr-head .c0{border-left:0;}
.gr-data .c{border-left:1px solid #d4d4d4;border-bottom:1px solid #d4d4d4;line-height:22px;height:21px;}
.gr-data .c0{border:0;display:flex;align-items:center;justify-content:center;}
.gr-data .c1{border-left-color:#ababab;}
.c0{width:19px;}
.c1{width:278px;}
.c2{width:177px;}
.c3{width:235px;}
.c4{width:251px;}
.c5{width:237px;}
.sel{background:#e3effa;}
.mid{display:flex;align-items:center;justify-content:center;}
.cb{width:13px;height:13px;border:1px solid #8a8a8a;background:#fff;display:block;position:relative;left:1px;}
.cbi{width:11px;height:11px;}
.rowmark{width:0;height:0;border:4px solid transparent;border-left:4px solid #8a8a8a;border-right:0;}
.sort{position:absolute;right:14px;top:6px;width:0;height:0;border:4px solid transparent;border-top:4px solid #777;border-bottom:0;}
.gr-empty{height:21px;border-bottom:1px solid #ababab;margin-left:1px;}
.gr-foot{padding:3px 0 0 21px;}
.sum{width:276px;height:24px;border:1px solid #ababab;text-align:right;padding-right:3px;line-height:24px;}

.status{height:24px;flex:none;background:#0072c6;margin:auto -1px 0;display:flex;justify-content:flex-end;align-items:flex-end;padding:0 3px 3px 0;}
.grip{width:9px;height:9px;}
```
